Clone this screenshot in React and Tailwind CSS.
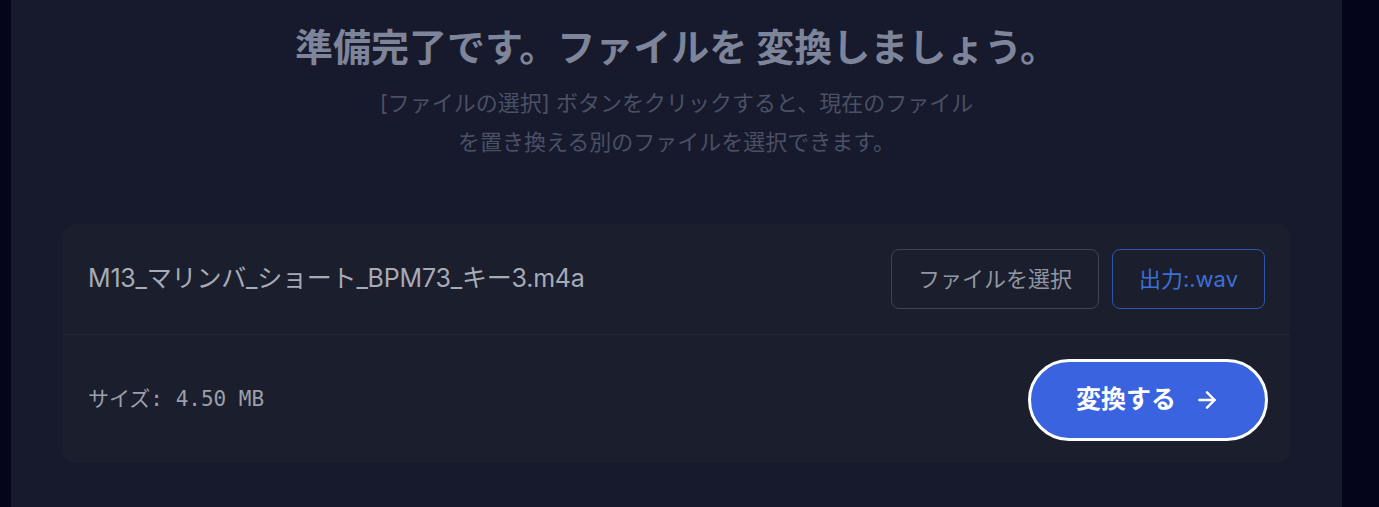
import { ArrowRight } from "lucide-react";

const sans = "font-['Inter','Noto_Sans_CJK_JP',sans-serif]";
const mono = "font-['DejaVu_Sans_Mono','Noto_Sans_CJK_JP',monospace]";

const FileCard = () => (
  <div className="mx-[52px] rounded-xl bg-[#1b1f2d]">
    <div className="flex items-center justify-between px-[25px] py-[25px] border-b border-[#22273a]">
      <span className="text-[25px] tracking-[-0.2px] text-[#a7abb6]">M13_マリンバ_ショート_BPM73_キー3.m4a</span>
      <div className="flex items-center gap-[13px]">
        <button className="h-[60px] px-[26px] rounded-lg border border-[#3e4353] text-[22px] text-[#9196a3]">
          ファイルを選択
        </button>
        <button className="h-[60px] px-[26px] rounded-lg border border-[#2c55ad] text-[22px] text-[#3d6fd8]">
          出力:.wav
        </button>
      </div>
    </div>
    <div className="flex items-center justify-between pl-[25px] pr-[22px] pt-[24px] pb-[22px]">
      <span className={`${mono} text-[21px] text-[#9b9fab]`}>サイズ: 4.50 MB</span>
      <button className="flex items-center justify-center gap-[18px] w-[240px] h-[82px] rounded-full border-[3px] border-white bg-[#3a63e0] text-white text-[25px] font-bold">
        変換する
        <ArrowRight size={26} strokeWidth={2.25} />
      </button>
    </div>
  </div>
);

export default function App() {
  return (
    <div className={`${sans} w-full h-[507px] bg-[#04041a] flex overflow-hidden`}>
      <div className="ml-[11px] w-[1331px] h-full bg-[#161a2c] pt-[25px]">
        <h1 className="text-center text-[38px] leading-[45px] font-bold text-[#7e8499]">
          準備完了です。ファイルを 変換しましょう。
        </h1>
        <p className="mx-auto mt-[14px] max-w-[612px] text-center text-[22px] leading-[39px] text-[#4a5065]">
          [ファイルの選択] ボタンをクリックすると、現在のファイルを置き換える別のファイルを選択できます。
        </p>
        <div className="mt-[62px]">
          <FileCard />
        </div>
      </div>
    </div>
  );
}
